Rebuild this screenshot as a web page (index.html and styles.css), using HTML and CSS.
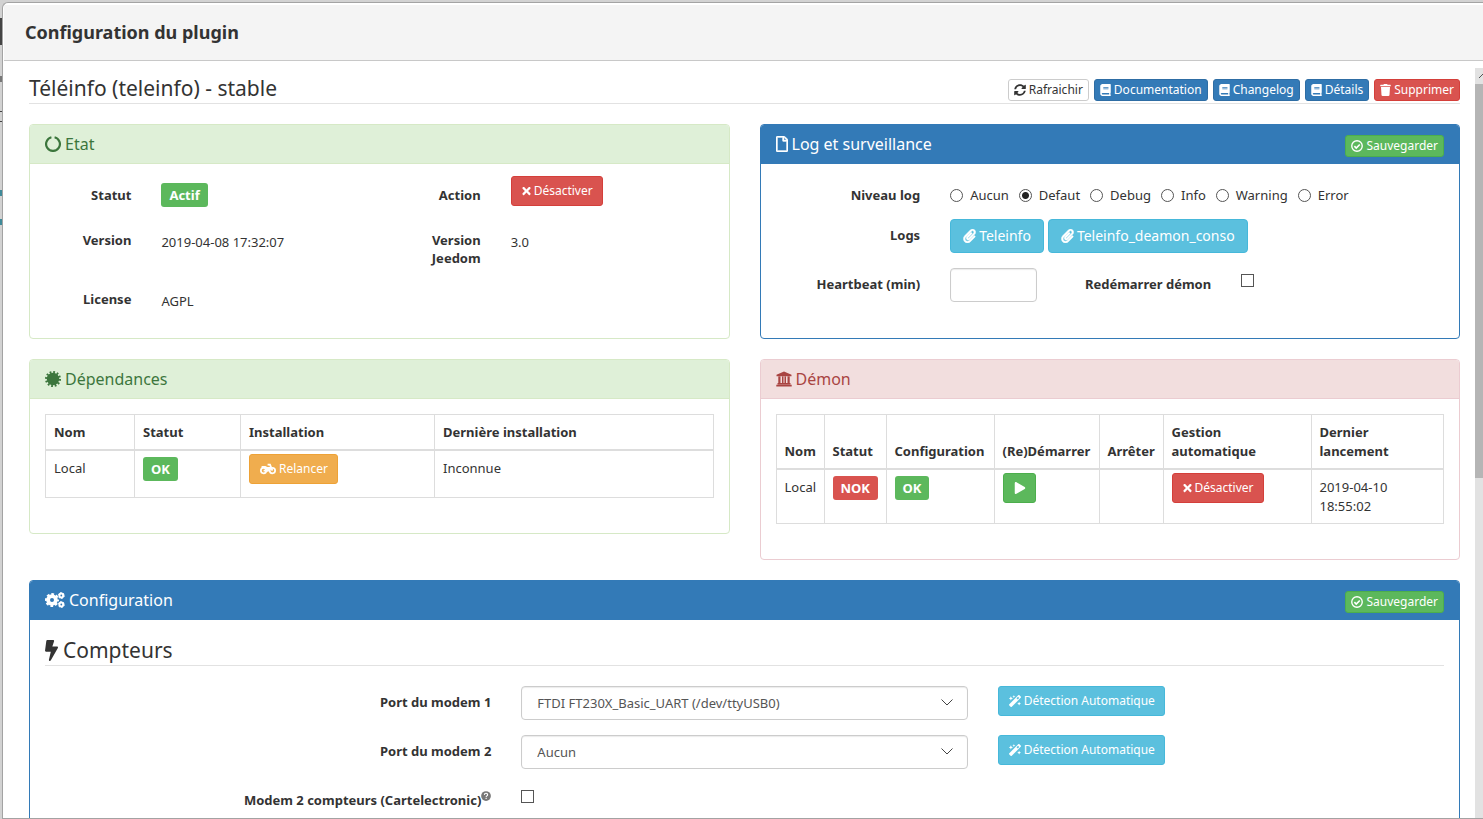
FILE: index.html
```html
<!DOCTYPE html>
<html lang="fr">
<head>
<meta charset="utf-8">
<title>Configuration du plugin</title>
<link rel="stylesheet" href="styles.css">
</head>
<body>
<svg class="sprite" aria-hidden="true">
  <symbol id="i-sync" viewBox="0 0 512 512"><path d="M370.72 133.28C339.458 104.008 298.888 87.962 255.848 88c-77.458.068-144.328 53.178-162.791 126.85-1.344 5.363-6.122 9.15-11.651 9.15H24.103c-7.498 0-13.194-6.807-11.807-14.176C33.933 94.924 134.813 8 256 8c66.448 0 126.791 26.136 171.315 68.685L463.03 40.97C478.149 25.851 504 36.559 504 57.941V192c0 13.255-10.745 24-24 24H345.941c-21.382 0-32.09-25.851-16.971-40.971l41.75-41.749zM32 296h134.059c21.382 0 32.09 25.851 16.971 40.971l-41.75 41.75c31.262 29.273 71.835 45.319 114.876 45.28 77.418-.07 144.315-53.144 162.787-126.849 1.344-5.363 6.122-9.15 11.651-9.15h57.304c7.498 0 13.194 6.807 11.807 14.176C478.067 417.076 377.187 504 256 504c-66.448 0-126.791-26.136-171.315-68.685L48.97 471.03C33.851 486.149 8 475.441 8 454.059V320c0-13.255 10.745-24 24-24z"/></symbol>
  <symbol id="i-book" viewBox="0 0 448 512"><path d="M448 360V24c0-13.3-10.7-24-24-24H96C43 0 0 43 0 96v320c0 53 43 96 96 96h328c13.3 0 24-10.7 24-24v-16c0-7.5-3.5-14.3-8.9-18.7-4.2-15.4-4.2-59.3 0-74.7 5.4-4.3 8.9-11.1 8.9-18.6zM128 134c0-3.3 2.7-6 6-6h212c3.3 0 6 2.7 6 6v20c0 3.3-2.7 6-6 6H134c-3.3 0-6-2.7-6-6v-20zm0 64c0-3.3 2.7-6 6-6h212c3.3 0 6 2.7 6 6v20c0 3.3-2.7 6-6 6H134c-3.3 0-6-2.7-6-6v-20zm253.4 250H96c-17.7 0-32-14.3-32-32 0-17.6 14.4-32 32-32h285.4c-1.9 17.1-1.9 46.9 0 64z"/></symbol>
  <symbol id="i-trash" viewBox="0 0 448 512"><path d="M432 32H312l-9.4-18.7A24 24 0 0 0 281.1 0H166.8a23.72 23.72 0 0 0-21.4 13.3L136 32H16A16 16 0 0 0 0 48v32a16 16 0 0 0 16 16h416a16 16 0 0 0 16-16V48a16 16 0 0 0-16-16zM53.2 467a48 48 0 0 0 47.9 45h245.8a48 48 0 0 0 47.9-45L416 128H32z"/></symbol>
  <symbol id="i-times" viewBox="0 0 352 512"><path d="M242.72 256l100.07-100.07c12.28-12.28 12.28-32.19 0-44.48l-22.24-22.24c-12.28-12.28-32.19-12.28-44.48 0L176 189.28 75.93 89.21c-12.28-12.28-32.19-12.28-44.48 0L9.21 111.45c-12.28 12.28-12.28 32.19 0 44.48L109.28 256 9.21 356.07c-12.28 12.28-12.28 32.19 0 44.48l22.24 22.24c12.28 12.28 32.2 12.28 44.48 0L176 322.72l100.07 100.07c12.28 12.28 32.2 12.28 44.48 0l22.24-22.24c12.28-12.28 12.28-32.19 0-44.48L242.72 256z"/></symbol>
  <symbol id="i-play" viewBox="0 0 448 512"><path d="M424.4 214.7L72.4 6.6C43.8-10.3 0 6.1 0 47.9V464c0 37.5 40.7 60.1 72.4 41.3l352-208c31.4-18.5 31.5-64.1 0-82.6z"/></symbol>
  <symbol id="i-file" viewBox="0 0 384 512"><path d="M369.9 97.9L286 14C277 5 264.8-.1 252.1-.1H48C21.5 0 0 21.5 0 48v416c0 26.5 21.5 48 48 48h288c26.5 0 48-21.5 48-48V131.9c0-12.7-5.1-25-14.1-34zM332.1 128H256V51.9l76.1 76.1zM48 464V48h160v104c0 13.3 10.7 24 24 24h104v288H48z" stroke="currentColor" stroke-width="12"/></symbol>
  <symbol id="i-clip" viewBox="0 0 448 512"><path stroke="currentColor" stroke-width="16" d="M43.246 466.142c-58.43-60.289-57.341-157.511 1.386-217.581L254.392 34c44.316-45.332 116.351-45.336 160.671 0 43.89 44.894 43.943 117.329 0 162.276L232.214 383.128c-29.855 30.537-78.633 30.111-107.982-.998-28.275-29.97-27.368-77.473 1.452-106.953l143.743-146.835c6.182-6.314 16.312-6.422 22.626-.241l22.861 22.379c6.315 6.182 6.422 16.312.241 22.626L171.427 319.927c-4.932 5.045-5.236 13.428-.648 18.292 4.372 4.634 11.245 4.711 15.688.165l182.849-186.851c19.613-20.062 19.613-52.725-.011-72.798-19.189-19.627-49.957-19.637-69.154 0L90.39 293.295c-34.763 35.56-35.299 93.12-1.191 128.313 34.01 35.093 88.985 35.137 123.058.286l172.06-175.999c6.177-6.319 16.307-6.433 22.626-.256l22.877 22.364c6.319 6.177 6.434 16.307.256 22.626l-172.06 175.998c-59.576 60.938-155.943 60.216-214.77-.485z"/></symbol>
  <symbol id="i-bolt" viewBox="0 0 320 512"><path d="M296 160H180.6l42.6-129.8C227.2 15 215.7 0 200 0H56C44 0 33.8 8.9 32.2 20.8l-32 240C-1.7 275.2 9.5 288 24 288h118.7L96.6 482.5c-3.6 15.2 8 29.5 23.3 29.5 8.4 0 16.4-4.4 20.8-12l176-304c9.3-15.9-2.2-36-20.7-36z"/></symbol>
  <symbol id="i-notch" viewBox="0 0 16 16"><path d="M9.6 1.300A6.900 6.900 0 1 1 6.400 1.300" fill="none" stroke="currentColor" stroke-width="2.200"/></symbol>
  <symbol id="i-check" viewBox="0 0 16 16"><circle cx="8" cy="8" r="7" fill="none" stroke="currentColor" stroke-width="1.800"/><path d="M4.500 8.200l2.500 2.500 4.700-4.700" fill="none" stroke="currentColor" stroke-width="2.200"/></symbol>
  <symbol id="i-cert" viewBox="0 0 16 16"><circle cx="8" cy="8" r="6.200"/><circle cx="8" cy="8" r="6.800" fill="none" stroke="currentColor" stroke-width="2.400" stroke-dasharray="1.780 1.780"/></symbol>
  <symbol id="i-bank" viewBox="0 0 16 16"><path d="M8 .500l7.500 3.300v1.400H.500V3.800zM2.300 5.500h2.200V12H6V5.500h1.500V12h1V5.500H10V12h1.500V5.500h2.200V12h.800v1.400h-13V12h.800zM.300 13.700h15.400V15.500H.300z"/></symbol>
  <symbol id="i-cogs" viewBox="0 0 20 16"><g fill="none" stroke="currentColor"><circle cx="7" cy="8" r="3.900" stroke-width="3.800"/><circle cx="7" cy="8" r="6" stroke-width="2" stroke-dasharray="2.700 2.012" stroke-dashoffset="1.350"/><circle cx="16.300" cy="3.500" r="1.900" stroke-width="2"/><circle cx="16.300" cy="3.500" r="3" stroke-width="1" stroke-dasharray="1.570 1.570"/><circle cx="16.300" cy="12.500" r="1.900" stroke-width="2"/><circle cx="16.300" cy="12.500" r="3" stroke-width="1" stroke-dasharray="1.570 1.570"/></g></symbol>
  <symbol id="i-moto" viewBox="0 0 20 14"><g fill="none" stroke="currentColor" stroke-width="2.200"><circle cx="4.500" cy="9" r="3.400"/><circle cx="15.500" cy="9" r="3.400"/><path d="M4.500 9h5.500l3.500-4M9.500 1.500h3L15.500 9M2 4.500h4.500l3.500 1.500h3"/></g><path d="M5 4.500h8.500L10.500 10H7z"/></symbol>
  <symbol id="i-magic" viewBox="0 0 16 16"><path d="M.400 12.300L12.300.400c.500-.500 1.100-.500 1.600 0L15.600 2.100c.500.500.500 1.100 0 1.600L3.700 15.600c-.500.500-1.100.500-1.600 0L.400 13.900c-.500-.500-.500-1.100 0-1.600z"/><path d="M10 4.300l1.700 1.700 2-2L12 2.300z" fill="#5bc0de"/><path d="M6.500 0l.600 1.600 1.600.600-1.600.600-.600 1.600-.600-1.600-1.600-.600 1.600-.600zM2.500 1.500l.900 2 2 .900-2 .900-.900 2-.900-2-2-.900 2-.900zM13.500 9l.800 1.700 1.700.800-1.700.800-.800 1.700-.800-1.700-1.700-.800 1.700-.800z"/></symbol>
  <symbol id="i-help" viewBox="0 0 16 16"><circle cx="8" cy="8" r="7.800"/><path d="M5.400 6.200c.200-3.600 5.400-3.100 5.200 0-.100 1.700-2.400 1.500-2.400 3.300M8.200 10.800v1.900" fill="none" stroke="#fff" stroke-width="1.800"/></symbol>
</svg>

<main class="dialog">
  <header class="dialog-head"><h1>Configuration du plugin</h1></header>
  <div class="dialog-body">
    <div class="content">
      <div class="legend">
        <h2>Téléinfo (teleinfo) - stable</h2>
        <div class="toolbar">
          <button class="btn xs default"><svg class="ico"><use href="#i-sync"/></svg>Rafraichir</button>
          <a class="btn xs primary" href="#"><svg class="ico book"><use href="#i-book"/></svg>Documentation</a>
          <a class="btn xs primary" href="#"><svg class="ico book"><use href="#i-book"/></svg>Changelog</a>
          <a class="btn xs primary" href="#"><svg class="ico book"><use href="#i-book"/></svg>Détails</a>
          <button class="btn xs danger"><svg class="ico book"><use href="#i-trash"/></svg>Supprimer</button>
        </div>
      </div>

      <div class="pair stretch">
        <section class="panel green">
          <div class="panel-head"><h3><svg class="ico"><use href="#i-notch"/></svg>Etat</h3></div>
          <div class="form state">
            <div class="row quad lead">
              <span class="name">Statut</span>
              <span class="cell"><span class="tag ok">Actif</span></span>
              <span class="name">Action</span>
              <span class="cell top"><button class="btn sm danger"><svg class="ico slim"><use href="#i-times"/></svg>Désactiver</button></span>
            </div>
            <div class="row quad tall">
              <span class="name">Version</span><span class="value">2019-04-08 17:32:07</span>
              <span class="name">Version Jeedom</span><span class="value">3.0</span>
            </div>
            <div class="row quad">
              <span class="name">License</span><span class="value">AGPL</span>
            </div>
          </div>
        </section>

        <section class="panel blue">
          <div class="panel-head"><h3><svg class="ico narrow"><use href="#i-file"/></svg>Log et surveillance</h3>
            <button class="btn xs success"><svg class="ico"><use href="#i-check"/></svg>Sauvegarder</button></div>
          <div class="form">
            <div class="row log" role="radiogroup" aria-labelledby="lvl">
              <span class="name" id="lvl">Niveau log</span>
              <div class="radios">
                <label><input type="radio" name="level">Aucun</label>
                <label><input type="radio" name="level" checked>Defaut</label>
                <label><input type="radio" name="level">Debug</label>
                <label><input type="radio" name="level">Info</label>
                <label><input type="radio" name="level">Warning</label>
                <label><input type="radio" name="level">Error</label>
              </div>
            </div>
            <div class="row log">
              <span class="name">Logs</span>
              <div class="cell logs">
                <a class="btn md info" href="#"><svg class="ico"><use href="#i-clip"/></svg>Teleinfo</a>
                <a class="btn md info" href="#"><svg class="ico"><use href="#i-clip"/></svg>Teleinfo_deamon_conso</a>
              </div>
            </div>
            <div class="row beat">
              <label class="name" for="beat">Heartbeat (min)</label>
              <div class="cell"><input class="field" id="beat" type="text"></div>
              <label class="name" for="restart">Redémarrer démon</label>
              <div class="cell box"><input type="checkbox" id="restart"></div>
            </div>
          </div>
        </section>
      </div>

      <div class="pair">
        <section class="panel green">
          <div class="panel-head"><h3><svg class="ico"><use href="#i-cert"/></svg>Dépendances</h3></div>
          <div class="panel-body">
            <table class="grid deps">
              <colgroup><col class="c-name"><col class="c-state"><col class="c-inst"><col></colgroup>
              <thead><tr><th>Nom</th><th>Statut</th><th>Installation</th><th>Dernière installation</th></tr></thead>
              <tbody><tr><td>Local</td><td class="t-tag"><span class="tag ok">OK</span></td>
                <td class="t-btn"><button class="btn sm warning"><svg class="ico wide"><use href="#i-moto"/></svg>Relancer</button></td><td>Inconnue</td></tr></tbody>
            </table>
          </div>
        </section>
        <section class="panel red">
          <div class="panel-head"><h3><svg class="ico"><use href="#i-bank"/></svg>Démon</h3></div>
          <div class="panel-body">
            <table class="grid daemon">
              <colgroup><col class="d1"><col class="d2"><col class="d3"><col class="d4"><col class="d5"><col class="d6"><col></colgroup>
              <thead><tr><th>Nom</th><th>Statut</th><th>Configuration</th><th>(Re)Démarrer</th><th>Arrêter</th><th>Gestion<br>automatique</th><th>Dernier<br>lancement</th></tr></thead>
              <tbody><tr><td>Local</td><td class="t-tag"><span class="tag nok">NOK</span></td><td class="t-tag"><span class="tag ok">OK</span></td>
                <td class="t-btn"><button class="btn sm success" aria-label="Démarrer"><svg class="ico"><use href="#i-play"/></svg></button></td><td></td>
                <td class="t-btn"><button class="btn sm danger"><svg class="ico slim"><use href="#i-times"/></svg>Désactiver</button></td><td>2019-04-10<br>18:55:02</td></tr></tbody>
            </table>
          </div>
        </section>
      </div>

      <section class="panel blue">
        <div class="panel-head"><h3><svg class="ico wide"><use href="#i-cogs"/></svg>Configuration</h3>
          <button class="btn xs success"><svg class="ico"><use href="#i-check"/></svg>Sauvegarder</button></div>
        <div class="panel-body">
          <div class="legend"><h2><svg class="ico bolt"><use href="#i-bolt"/></svg>Compteurs</h2></div>
          <div class="config">
            <div class="row thirds">
              <label class="name" for="m1">Port du modem 1</label>
              <div class="cell"><span class="pick"><select id="m1"><option>FTDI FT230X_Basic_UART (/dev/ttyUSB0)</option></select><svg class="chev" viewBox="0 0 12 7"><path d="M.500.500L6 6l5.500-5.500"/></svg></span></div>
              <div class="cell"><button class="btn sm info"><svg class="ico"><use href="#i-magic"/></svg>Détection Automatique</button></div>
            </div>
            <div class="row thirds">
              <label class="name" for="m2">Port du modem 2</label>
              <div class="cell"><span class="pick"><select id="m2"><option>Aucun</option></select><svg class="chev" viewBox="0 0 12 7"><path d="M.500.500L6 6l5.500-5.500"/></svg></span></div>
              <div class="cell"><button class="btn sm info"><svg class="ico"><use href="#i-magic"/></svg>Détection Automatique</button></div>
            </div>
            <div class="row thirds">
              <label class="name" for="two">Modem 2 compteurs (Cartelectronic)<svg class="ico help"><use href="#i-help"/></svg></label>
              <div class="cell box"><input type="checkbox" id="two"></div>
            </div>
          </div>
        </div>
      </section>
    </div>
    <div class="track" aria-hidden="true"><svg class="up" viewBox="0 0 8 16"><path d="M4 10l4-4"/></svg><div class="thumb"></div></div>
  </div>
</main>
</body>
</html>
```
FILE: styles.css
```css
* { box-sizing: border-box; }

body {
  margin: 0;
  height: 100vh;
  overflow: hidden;
  display: flex;
  padding: 2px 0 0 2px;
  font: 13px/18px "Noto Sans", "Open Sans", sans-serif;
  color: #333;
  background:
    linear-gradient(#444, #444) 0 18px / 2px 27px no-repeat,
    linear-gradient(#777, #777) 0 76px / 2px 6px no-repeat,
    linear-gradient(#444, #444) 0 111px / 2px 1px no-repeat,
    linear-gradient(#444, #444) 0 121px / 2px 1px no-repeat,
    linear-gradient(#3f8a99, #3f8a99) 0 190px / 2px 6px no-repeat,
    linear-gradient(#3f8a99, #3f8a99) 0 219px / 2px 6px no-repeat,
    #d2d2d2;
}

h1, h2, h3 { margin: 0; font-weight: 400; }
.sprite { position: absolute; width: 0; height: 0; }

.dialog {
  flex: 1;
  min-width: 0;
  display: flex;
  flex-direction: column;
  overflow: hidden;
  background: #fff;
  border: 1px solid #a3a3a3;
  border-right: 0;
  border-top-left-radius: 6px;
}
.dialog-head {
  flex: none;
  margin: 2px 0 0 1px;
  padding: 15px 21px;
  background: #f4f4f4;
  border-bottom: 1px solid #c8c8c8;
}
.dialog-head h1 { font-size: 18px; line-height: 25px; font-weight: 700; }
.dialog-body { flex: 1; min-height: 0; display: flex; }
.content { flex: 1; min-width: 0; padding: 13px 15px 0 26px; overflow: hidden; }

.track { flex: none; width: 8px; margin-top: 7px; background: #e2e2e2; }
.thumb { height: 394px; background: #b5b5b5; }
.up { display: block; width: 8px; height: 16px; background: #e2e2e2; fill: none; stroke: #555; }

.legend {
  display: flex;
  justify-content: space-between;
  align-items: flex-end;
  margin-bottom: 20px;
  border-bottom: 1px solid #e2e2e2;
}
.legend h2 { font-size: 21px; line-height: 28px; padding-bottom: 1px; }
.toolbar { display: flex; gap: 5px; padding-bottom: 2px; }

.ico { width: 12px; height: 12px; flex: none; fill: currentColor; }
.ico.slim { width: 9px; }
.ico.book { width: 11px; }
.ico.wide { width: 16px; }
.ico.help { width: 10px; height: 10px; color: #777; vertical-align: 4px; }

.btn {
  display: inline-flex;
  align-items: center;
  justify-content: center;
  gap: 3px;
  font-family: inherit;
  font-size: 12px;
  line-height: 18px;
  color: #fff;
  border: 1px solid;
  border-radius: 3px;
  text-decoration: none;
  white-space: nowrap;
  vertical-align: top;
}
.xs { padding: 1px 5px; }
.sm { padding: 5px 9px; min-height: 30px; }
.sm .ico { margin-left: 1px; }
.md { padding: 7px 12px; font-size: 14px; border-radius: 4px; }
.md .ico { width: 13px; height: 14px; }
.default { color: #333; background: #fff; border-color: #ccc; }
.primary { background: #337ab7; border-color: #2e6da4; }
.danger { background: #d9534f; border-color: #d43f3a; }
.success { background: #5cb85c; border-color: #4cae4c; }
.info { background: #5bc0de; border-color: #46b8da; }
.warning { background: #f0ad4e; border-color: #eea236; }

.tag {
  display: inline-block;
  padding: 3px 8px;
  line-height: 18px;
  font-weight: 700;
  color: #fff;
  border-radius: 3px;
  vertical-align: top;
}
.ok { background: #5cb85c; }
.nok { background: #d9534f; }

.pair {
  display: grid;
  grid-template-columns: 1fr 1fr;
  gap: 30px;
  align-items: start;
  margin-bottom: 20px;
}
.stretch { align-items: stretch; }

.panel { border: 1px solid; border-radius: 4px; background: #fff; min-width: 0; }
.panel-head {
  display: flex;
  justify-content: space-between;
  align-items: flex-start;
  height: 39px;
  padding: 10px 15px;
  border-bottom: 1px solid;
  border-radius: 3px 3px 0 0;
}
.panel-head h3 { display: flex; align-items: center; gap: 4px; font-size: 16px; line-height: 18px; }
.panel-head .ico { width: 16px; height: 16px; }
.panel-head .narrow { width: 12px; }
.panel-head .wide { width: 20px; }
.panel-head .btn .ico { width: 12px; height: 12px; }
.green, .green .panel-head { border-color: #d6e9c6; }
.green .panel-head { background: #dff0d8; color: #3c763d; }
.blue, .blue .panel-head { border-color: #337ab7; }
.blue .panel-head { background: #337ab7; color: #fff; }
.red, .red .panel-head { border-color: #ebccd1; }
.red .panel-head { background: #f2dede; color: #a94442; }
.panel-body { padding: 15px 15px 35px; }

.form { padding: 15px 0 10px; }
.form.state { padding-top: 12px; }
.row { display: grid; margin-bottom: 15px; }
.quad { grid-template-columns: 2fr 4fr 2fr 4fr; min-height: 30px; }
.log { grid-template-columns: 3fr 9fr; }
.beat { grid-template-columns: 3fr 2fr 3fr 4fr; }
.thirds { grid-template-columns: repeat(3, 1fr); }
.row > * { min-width: 0; padding: 0 15px; }
.row > .name { padding-top: 7px; text-align: right; font-weight: 700; }
.row > .value { padding-top: 9px; }
.lead { min-height: 33px; }
.tall { min-height: 44px; }
.lead > .name { padding-top: 10px; }
.lead > .cell { padding-top: 7px; }
.lead > .top { padding-top: 0; }
.row > .box { padding-top: 6px; }
.logs { display: flex; gap: 4px; }
.row > .radios { display: flex; gap: 10px; padding-top: 7px; }
.radios label { display: flex; align-items: center; gap: 7px; }

input[type="radio"], input[type="checkbox"] {
  appearance: none;
  display: block;
  width: 13px;
  height: 13px;
  margin: 0;
  border: 1px solid #555;
  background: #fff;
}
input[type="radio"] { border-radius: 50%; }
input[type="radio"]:checked { background: radial-gradient(circle, #222 3px, #fff 4px); }

.field, select {
  display: block;
  width: 100%;
  height: 34px;
  border: 1px solid #ccc;
  border-radius: 4px;
  background: #fff;
  font: inherit;
  color: #555;
  box-shadow: inset 0 1px 1px rgba(0, 0, 0, .08);
}
select { appearance: none; padding: 0 40px 0 15px; }
.pick { display: block; position: relative; }
.chev { position: absolute; right: 15px; top: 13px; width: 12px; height: 7px; fill: none; stroke: #444; pointer-events: none; }

.grid { width: 100%; table-layout: fixed; border-collapse: collapse; line-height: 19px; }
.grid th, .grid td { padding: 8px 8px 7px; text-align: left; vertical-align: top; border: 1px solid #ddd; }
.grid th { vertical-align: bottom; border-bottom-width: 2px; }
.grid .t-tag { padding-top: 6px; }
.grid .t-btn { padding-top: 3px; padding-bottom: 13px; }
.c-name { width: 89px; }
.c-state { width: 106px; }
.c-inst { width: 194px; }
.d1 { width: 48px; }
.d2 { width: 62px; }
.d3 { width: 108px; }
.d4 { width: 105px; }
.d5 { width: 64px; }
.d6 { width: 148px; }

.panel-body .legend h2 { display: flex; align-items: center; gap: 5px; line-height: 30px; padding-bottom: 0; }
.legend .bolt { width: 13px; height: 21px; }
.config { margin: 0 -15px; }
```
